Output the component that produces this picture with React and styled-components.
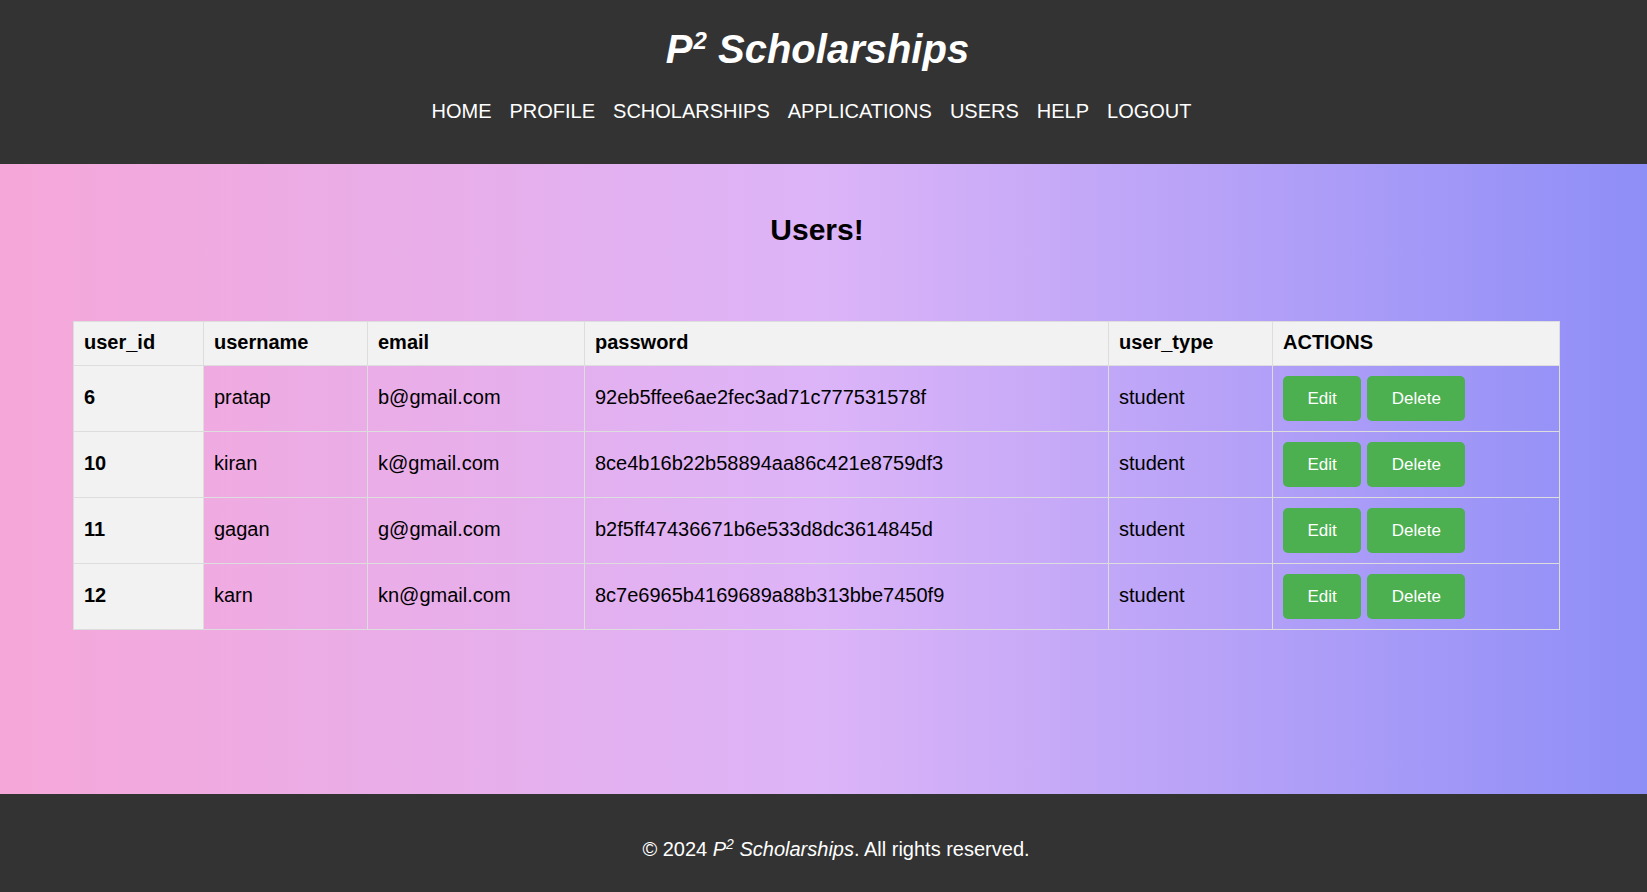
import styled, { createGlobalStyle } from 'styled-components';

const GlobalStyle = createGlobalStyle`
  html, body {
    margin: 0;
    padding: 0;
  }
  body {
    font-family: "Liberation Sans", Arial, sans-serif;
  }
`;

const Page = styled.div`
  display: flex;
  flex-direction: column;
  min-height: 100vh;
`;

const Header = styled.header`
  background-color: #333;
  color: white;
  padding: 26px 0 41px;
  display: flex;
  flex-direction: column;
  align-items: center;
`;

const Title = styled.h1`
  margin: 0;
  padding-right: 12px;
  font-size: 40px;
  line-height: 46px;
  font-weight: bold;
  font-style: italic;
`;

const TitleSup = styled.sup`
  font-size: 24px;
  line-height: 0;
  vertical-align: 14px;
  margin-left: 1px;
`;

const FooterSup = styled.sup`
  font-size: 14px;
  line-height: 0;
  vertical-align: 7px;
`;

const Nav = styled.nav`
  margin-top: 28px;
  padding-right: 24px;
  display: flex;
  gap: 18px;
`;

const NavLink = styled.a`
  color: white;
  text-decoration: none;
  font-size: 20px;
  line-height: 23px;
`;

const Main = styled.main`
  flex: 1;
  background: linear-gradient(90deg, #f6a7d9 0%, #dcb4f8 50%, #8e8ef7 100%);
  padding-top: 49px;
`;

const Heading = styled.h2`
  margin: 0;
  padding-right: 13px;
  text-align: center;
  font-size: 30px;
  line-height: 34px;
  font-weight: bold;
  color: #000;
`;

const Table = styled.table`
  margin: 74px 0 0 73px;
  width: 1487px;
  table-layout: fixed;
  border-collapse: collapse;
  font-size: 20px;
  line-height: 23px;
  color: #000;
`;

const Th = styled.th`
  background-color: #f2f2f2;
  border: 1px solid #ddd;
  padding: 9px 10px 11px;
  text-align: left;
  font-weight: bold;
`;

const Td = styled.td`
  border: 1px solid #ddd;
  padding: 9px 10px 11px;
  text-align: left;
  background-color: ${(p) => (p.$first ? '#f2f2f2' : 'transparent')};
  font-weight: ${(p) => (p.$first ? 'bold' : 'normal')};
`;

const ActionCell = styled.td`
  border: 1px solid #ddd;
  padding: 10px;
`;

const Actions = styled.div`
  display: flex;
  gap: 6px;
`;

const Button = styled.button`
  height: 45px;
  padding: 0 24.5px;
  border: none;
  border-radius: 5px;
  background-color: #4caf50;
  color: white;
  font-family: "Liberation Sans", Arial, sans-serif;
  font-size: 17px;
  cursor: pointer;
`;

const Footer = styled.footer`
  background-color: #333;
  color: white;
  padding: 44px 0 31px 25px;
  text-align: center;
  font-size: 20px;
  line-height: 23px;
`;

const users = [
  { id: 6, name: 'pratap', email: 'b@gmail.com', pass: '92eb5ffee6ae2fec3ad71c777531578f', type: 'student' },
  { id: 10, name: 'kiran', email: 'k@gmail.com', pass: '8ce4b16b22b58894aa86c421e8759df3', type: 'student' },
  { id: 11, name: 'gagan', email: 'g@gmail.com', pass: 'b2f5ff47436671b6e533d8dc3614845d', type: 'student' },
  { id: 12, name: 'karn', email: 'kn@gmail.com', pass: '8c7e6965b4169689a88b313bbe7450f9', type: 'student' },
];

const links = ['HOME', 'PROFILE', 'SCHOLARSHIPS', 'APPLICATIONS', 'USERS', 'HELP', 'LOGOUT'];

export default function App() {
  return (
    <Page>
      <GlobalStyle />
      <Header>
        <Title>
          P<TitleSup>2</TitleSup> Scholarships
        </Title>
        <Nav>
          {links.map((l) => (
            <NavLink key={l} href="#">{l}</NavLink>
          ))}
        </Nav>
      </Header>
      <Main>
        <Heading>Users!</Heading>
        <Table>
          <colgroup>
            <col style={{ width: 130 }} />
            <col style={{ width: 164 }} />
            <col style={{ width: 217 }} />
            <col style={{ width: 524 }} />
            <col style={{ width: 164 }} />
            <col />
          </colgroup>
          <thead>
            <tr>
              <Th>user_id</Th>
              <Th>username</Th>
              <Th>email</Th>
              <Th>password</Th>
              <Th>user_type</Th>
              <Th>ACTIONS</Th>
            </tr>
          </thead>
          <tbody>
            {users.map((u) => (
              <tr key={u.id}>
                <Td $first>{u.id}</Td>
                <Td>{u.name}</Td>
                <Td>{u.email}</Td>
                <Td>{u.pass}</Td>
                <Td>{u.type}</Td>
                <ActionCell>
                  <Actions>
                    <Button>Edit</Button>
                    <Button>Delete</Button>
                  </Actions>
                </ActionCell>
              </tr>
            ))}
          </tbody>
        </Table>
      </Main>
      <Footer>
        © 2024 <em>P<FooterSup>2</FooterSup> Scholarships</em>. All rights reserved.
      </Footer>
    </Page>
  );
}
